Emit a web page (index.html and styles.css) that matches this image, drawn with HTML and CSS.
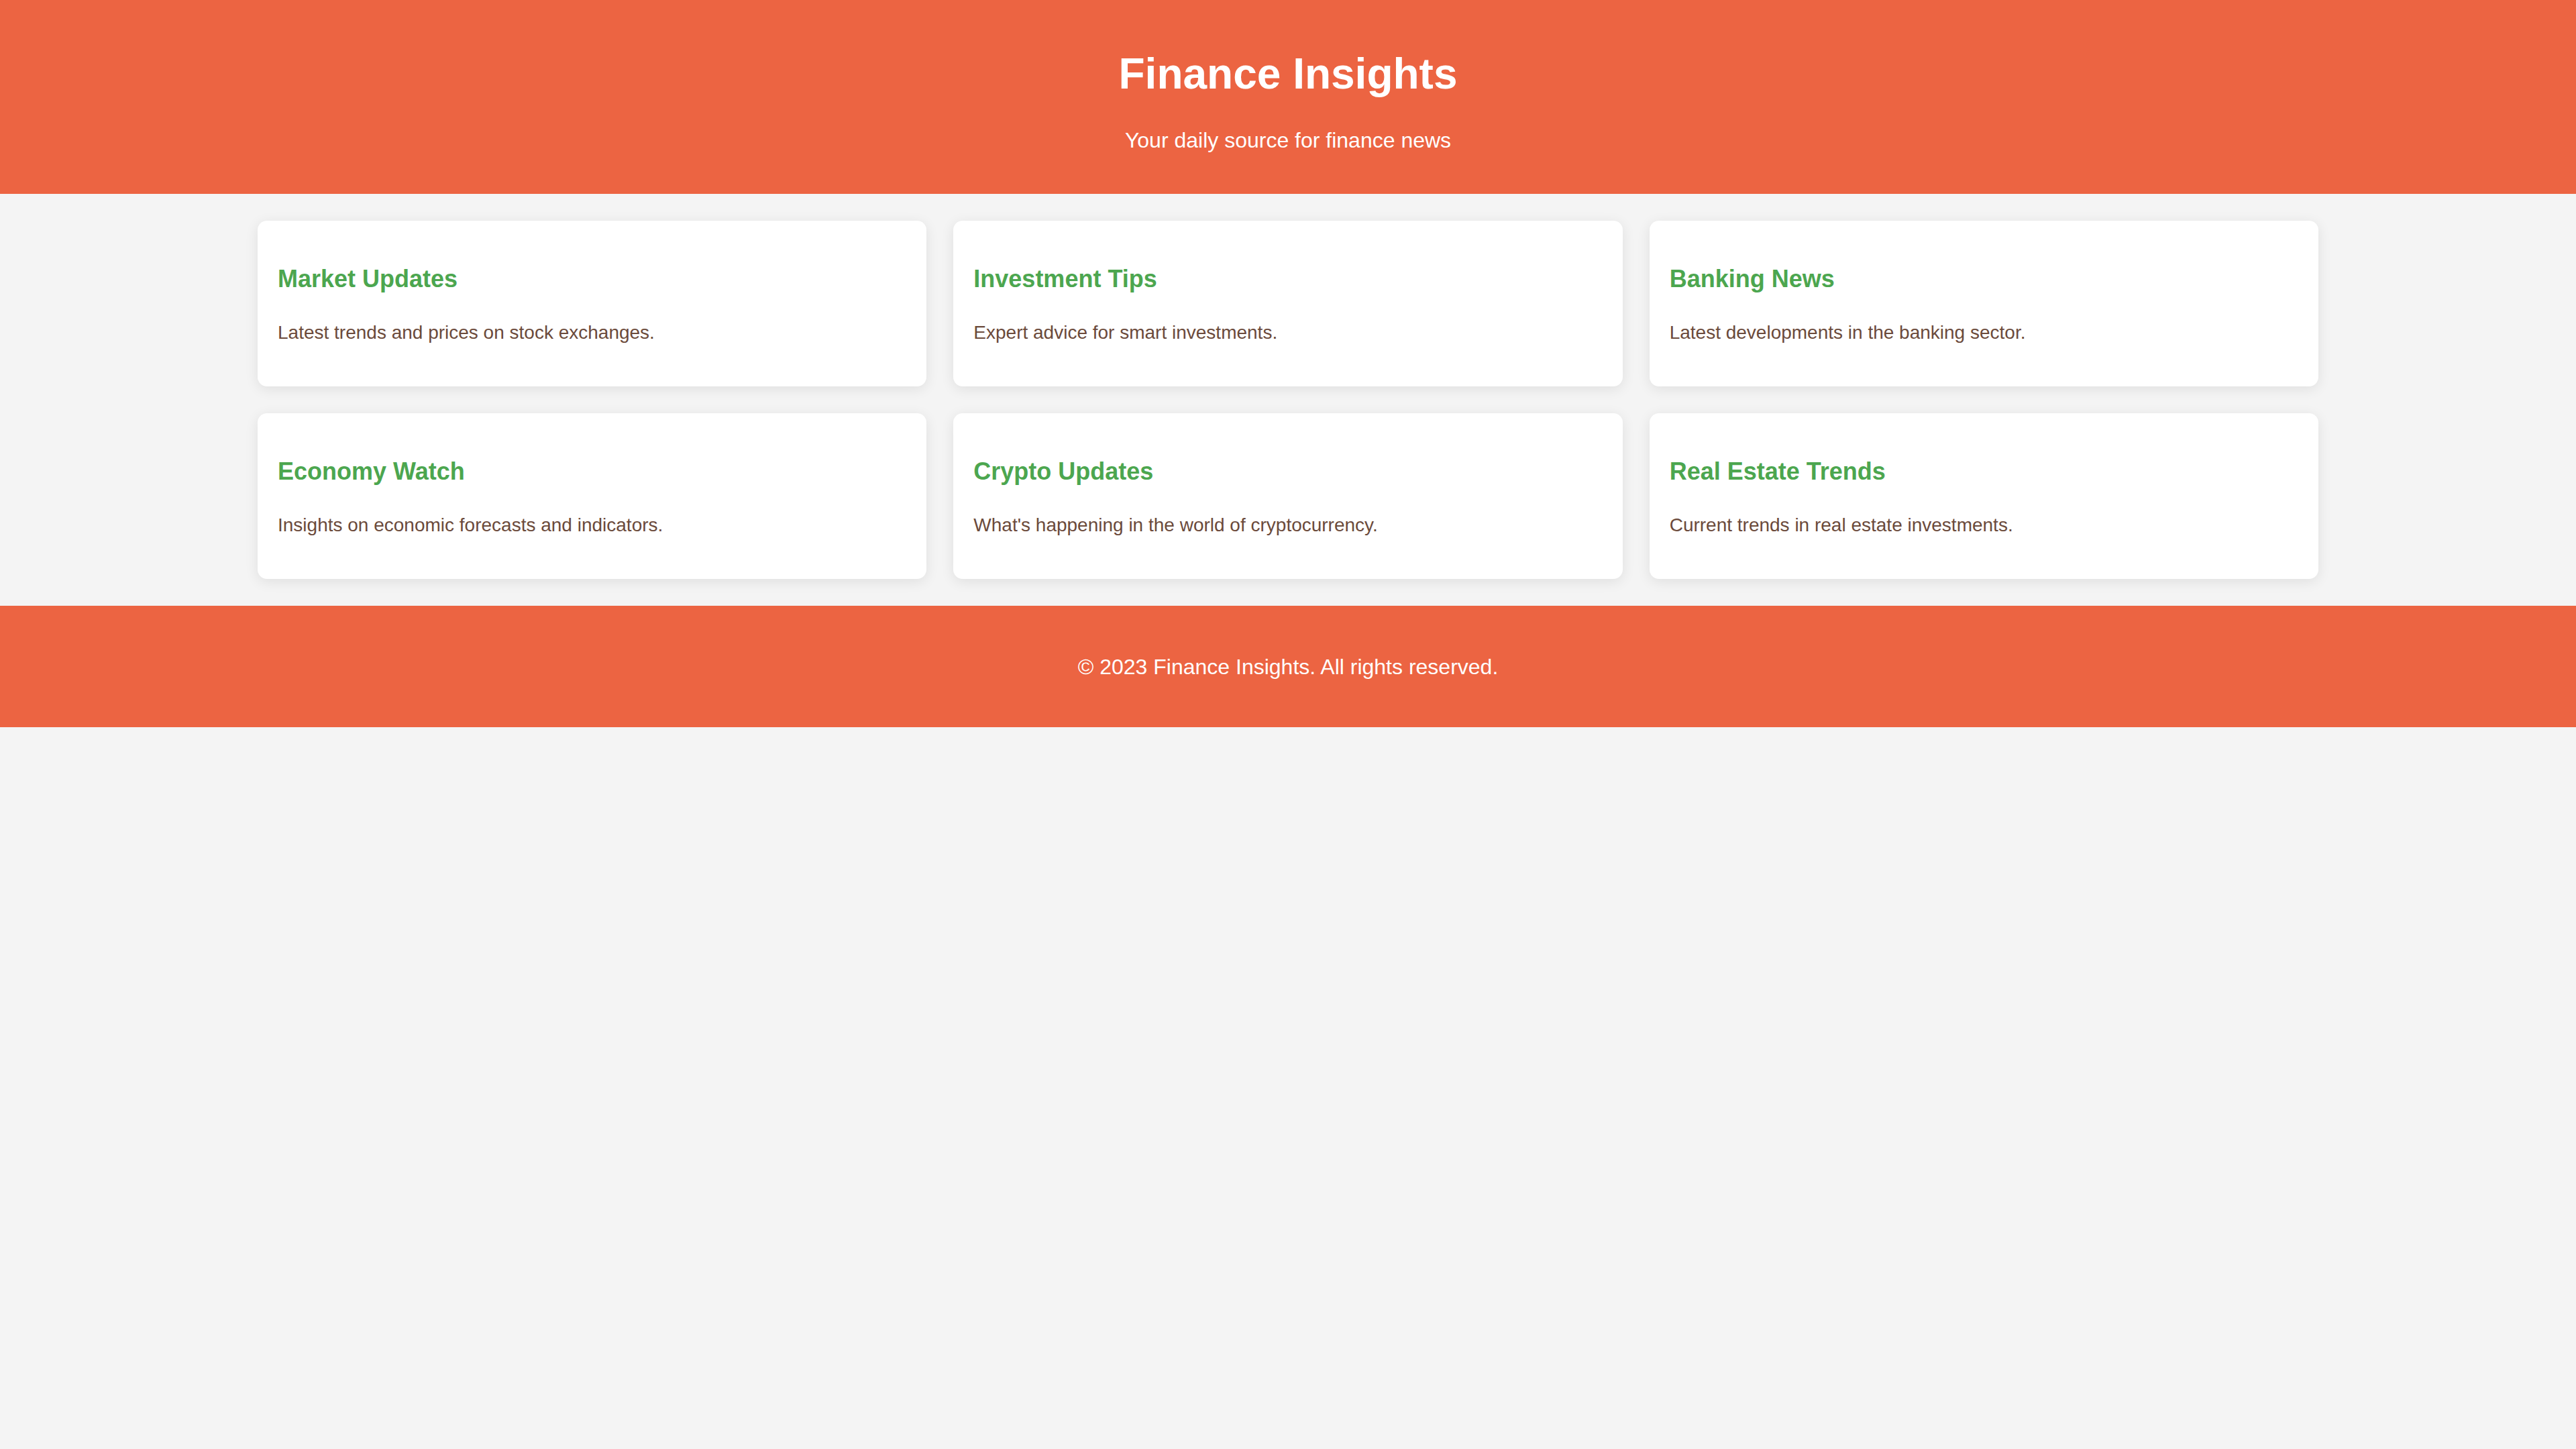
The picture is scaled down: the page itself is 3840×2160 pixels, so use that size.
FILE: index.html
```html
<!DOCTYPE html>
<html lang="en">
<head>
<meta charset="utf-8">
<title>Finance Insights</title>
<link rel="stylesheet" href="styles.css">
</head>
<body>
<header class="site-header">
  <h1 class="site-title">Finance Insights</h1>
  <p class="site-tagline">Your daily source for finance news</p>
</header>
<main class="content">
  <div class="card-grid">
    <article class="card">
      <h2 class="card-title">Market Updates</h2>
      <p class="card-text">Latest trends and prices on stock exchanges.</p>
    </article>
    <article class="card">
      <h2 class="card-title">Investment Tips</h2>
      <p class="card-text">Expert advice for smart investments.</p>
    </article>
    <article class="card">
      <h2 class="card-title">Banking News</h2>
      <p class="card-text">Latest developments in the banking sector.</p>
    </article>
    <article class="card">
      <h2 class="card-title">Economy Watch</h2>
      <p class="card-text">Insights on economic forecasts and indicators.</p>
    </article>
    <article class="card">
      <h2 class="card-title">Crypto Updates</h2>
      <p class="card-text">What's happening in the world of cryptocurrency.</p>
    </article>
    <article class="card">
      <h2 class="card-title">Real Estate Trends</h2>
      <p class="card-text">Current trends in real estate investments.</p>
    </article>
  </div>
</main>
<footer class="site-footer">
  <p class="footer-text">&copy; 2023 Finance Insights. All rights reserved.</p>
</footer>
</body>
</html>
```
FILE: styles.css
```css
* { box-sizing: border-box; }

html, body {
  margin: 0;
  padding: 0;
}

body {
  background: #f4f4f4;
  font-family: "Liberation Sans", Arial, Helvetica, sans-serif;
  color: #6b4a3b;
}

.site-header {
  background: #ec6442;
  color: #ffffff;
  text-align: center;
  padding: 73px 0 61px;
}

.site-title {
  margin: 0 0 44px;
  font-size: 64px;
  line-height: 74px;
  font-weight: bold;
}

.site-tagline {
  margin: 0;
  font-size: 32px;
  line-height: 37px;
}

.content {
  padding: 40px 0;
}

.card-grid {
  width: 80%;
  margin: 0 auto;
  display: grid;
  grid-template-columns: repeat(3, 1fr);
  gap: 40px;
}

.card {
  background: #ffffff;
  border-radius: 14px;
  box-shadow: 0 4px 20px rgba(0, 0, 0, 0.09);
  padding: 30px;
}

.card-title {
  margin: 36px 0 44px;
  font-size: 36px;
  line-height: 41px;
  font-weight: bold;
  color: #4ca64f;
}

.card-text {
  margin: 0 0 34px;
  font-size: 28px;
  line-height: 32px;
  color: #6b4a3b;
}

.site-footer {
  background: #ec6442;
  color: #ffffff;
  text-align: center;
  padding: 73px 0 71px;
}

.footer-text {
  margin: 0;
  font-size: 32px;
  line-height: 37px;
}
```
